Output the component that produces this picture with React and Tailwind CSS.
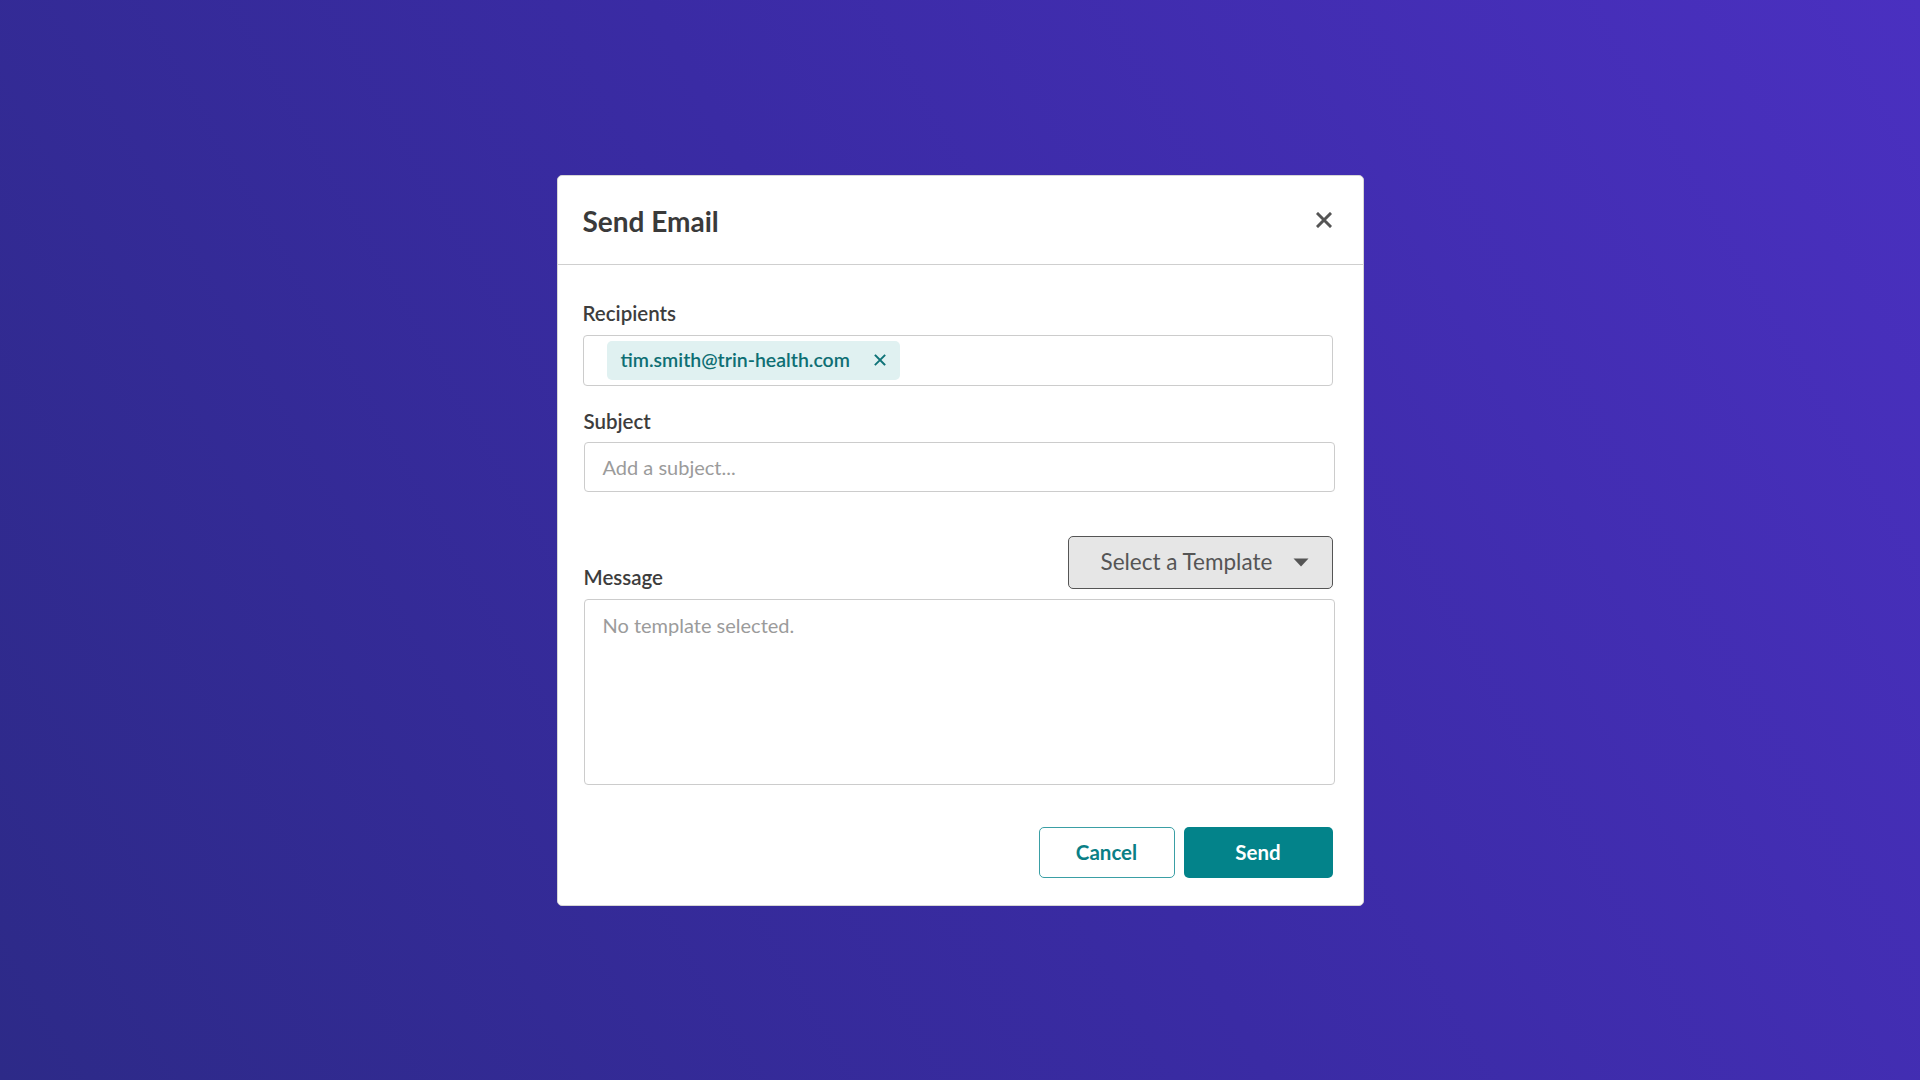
import React from 'react'

const font = { fontFamily: '"Source Sans Pro", Lato, "Liberation Sans", sans-serif' }

function XIcon({ className, strokeWidth = 3 }) {
  return (
    <svg viewBox="0 0 16 16" className={className} fill="none" stroke="currentColor" strokeWidth={strokeWidth} strokeLinecap="square">
      <path d="M2 2 L14 14 M14 2 L2 14" />
    </svg>
  )
}

export default function App() {
  return (
    <div
      className="w-full h-screen flex items-center justify-center bg-[linear-gradient(60deg,#2d2a88_0%,#3a2ba4_50%,#4a30c0_100%)]"
      style={font}
    >
      <div className="w-[807px] bg-white border border-[#d6d6d6] rounded-[5px] flex flex-col">
        {/* Cabecera */}
        <div className="h-[89px] flex items-center justify-between pl-[25px] pr-[31px] border-b border-[#cfcfcf]">
          <h2 className="text-[28px] font-bold text-[#3a3a3a] leading-none pt-[2px]">Send Email</h2>
          <button className="text-[#555555] w-[16px] h-[16px] flex items-center justify-center">
            <XIcon className="w-[16px] h-[16px]" strokeWidth={3} />
          </button>
        </div>

        {/* Cuerpo */}
        <div className="flex flex-col pl-[25px] pr-[30px] pt-[36px] pb-[27px]">
          <label className="text-[20.5px] font-semibold text-[#3d3d3d] leading-[24px] mb-[10px]">Recipients</label>
          <div className="h-[51px] w-[750px] border border-[#cccccc] rounded-[4px] flex items-center pl-[23px]">
            <span className="h-[39px] flex items-center gap-[24px] bg-[#e0f1f1] rounded-[5px] pl-[14px] pr-[14px]">
              <span className="text-[19.5px] font-semibold text-[#0e6f74]">tim.smith@trin-health.com</span>
              <XIcon className="w-[12px] h-[12px] text-[#0e7378]" strokeWidth={2.5} />
            </span>
          </div>

          <label className="text-[20.5px] font-semibold text-[#3d3d3d] leading-[24px] mt-[23px] mb-[9px] pl-[1px]">Subject</label>
          <div className="h-[50px] w-[751px] ml-[1px] border border-[#cccccc] rounded-[4px] flex items-center pl-[18px]">
            <span className="text-[20px] text-[#9b9b9b]">Add a subject...</span>
          </div>

          <div className="flex items-end justify-between mt-[44px] pl-[1px]">
            <label className="text-[20.5px] font-semibold text-[#3d3d3d] leading-[24px]">Message</label>
            <button className="h-[53px] w-[265px] bg-[#e6e6e6] border border-[#555555] rounded-[5px] flex items-center justify-between pl-[32px] pr-[23px]">
              <span className="text-[22.5px] text-[#555555]">Select a Template</span>
              <svg viewBox="0 0 16 9" className="w-[16px] h-[9px] text-[#555555]" fill="currentColor">
                <path d="M0.5 0.5 H15.5 L8 8.5 Z" />
              </svg>
            </button>
          </div>

          <div className="h-[186px] w-[751px] ml-[1px] mt-[10px] border border-[#cccccc] rounded-[4px] pl-[18px] pt-[10px]">
            <span className="text-[20px] text-[#9b9b9b]">No template selected.</span>
          </div>

          <div className="flex justify-end gap-[9px] mt-[42px]">
            <button className="h-[51px] w-[136px] border border-[#3a9fa5] rounded-[5px] text-[20.5px] font-bold text-[#0a7f86] bg-white">
              Cancel
            </button>
            <button className="h-[51px] w-[149px] rounded-[5px] text-[20.5px] font-bold text-white bg-[#03838a]">
              Send
            </button>
          </div>
        </div>
      </div>
    </div>
  )
}
